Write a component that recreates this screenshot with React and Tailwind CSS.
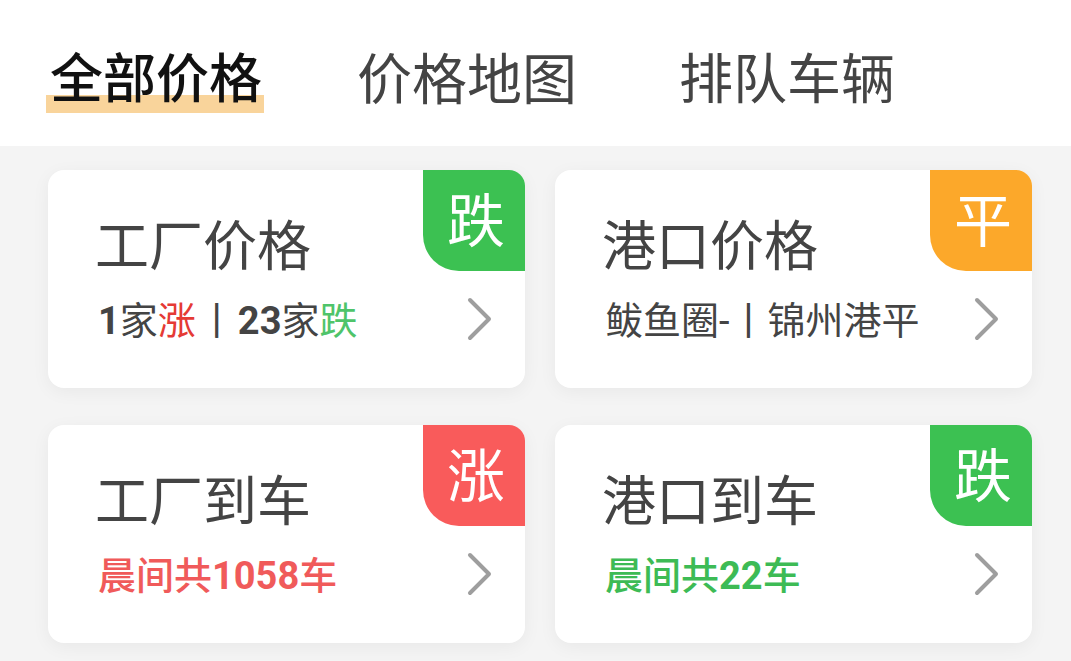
const cards = [
  {
    title: "工厂价格",
    badge: "跌",
    badgeColor: "bg-[#3cc152]",
    sub: (
      <>
        <span className="font-bold">1</span>
        <span>家</span>
        <span className="text-[#e53a35]">涨</span>
        <span className="mx-[2px] font-normal">丨</span>
        <span className="font-bold">23</span>
        <span>家</span>
        <span className="text-[#4fc46a]">跌</span>
      </>
    ),
    subColor: "text-[#444444]",
  },
  {
    title: "港口价格",
    badge: "平",
    badgeColor: "bg-[#fca82a]",
    sub: <span>鲅鱼圈-丨锦州港平</span>,
    subColor: "text-[#444444]",
  },
  {
    title: "工厂到车",
    badge: "涨",
    badgeColor: "bg-[#f95b5b]",
    sub: (
      <>
        <span className="font-medium">晨间共</span>
        <span className="font-bold">1058</span>
        <span className="font-medium">车</span>
      </>
    ),
    subColor: "text-[#f05a5a]",
  },
  {
    title: "港口到车",
    badge: "跌",
    badgeColor: "bg-[#3cc152]",
    sub: (
      <>
        <span className="font-medium">晨间共</span>
        <span className="font-bold">22</span>
        <span className="font-medium">车</span>
      </>
    ),
    subColor: "text-[#3dbb55]",
  },
];

function Chevron() {
  return (
    <svg width="26" height="44" viewBox="0 0 26 44" fill="none">
      <polyline
        points="3,3 22,22 3,41"
        stroke="#9e9e9e"
        strokeWidth="4"
        strokeLinecap="round"
        strokeLinejoin="round"
      />
    </svg>
  );
}

function Card({ card }) {
  return (
    <div className="relative h-[218px] rounded-2xl bg-white shadow-[0_4px_18px_rgba(0,0,0,0.05)]">
      <div
        className={`absolute right-0 top-0 flex h-[101px] w-[102px] items-center justify-center rounded-tr-2xl rounded-bl-[36px] pb-2 pl-1 text-[58px] leading-none text-white ${card.badgeColor}`}
      >
        {card.badge}
      </div>
      <div className="pl-[47px] pt-[46px] text-[54px] leading-[54px] text-[#444444]">
        {card.title}
      </div>
      <div className="flex items-center justify-between pl-[50px] pr-[32px] pt-[31px]">
        <div
          className={`whitespace-nowrap text-[38px] leading-[38px] ${card.subColor}`}
          style={{ fontFamily: 'Roboto, "Noto Sans CJK SC", sans-serif' }}
        >
          {card.sub}
        </div>
        <div className="-mt-[4px]">
          <Chevron />
        </div>
      </div>
    </div>
  );
}

export default function App() {
  const tabs = [
    { label: "全部价格", active: true, ml: "ml-[50px]", size: "text-[53px]" },
    { label: "价格地图", active: false, ml: "ml-[95px]", size: "text-[55px]" },
    { label: "排队车辆", active: false, ml: "ml-[102px]", size: "text-[54px]" },
  ];

  return (
    <div
      className="h-[661px] w-[1071px] overflow-hidden bg-[#f4f4f4]"
      style={{ fontFamily: '"Noto Sans CJK SC", sans-serif' }}
    >
      <div className="flex h-[146px] items-start bg-white pt-[49px]">
        {tabs.map((t) => (
          <div key={t.label} className={`relative ${t.ml}`}>
            {t.active && (
              <div className="absolute -left-[4px] -right-[2px] top-[46px] h-[18px] bg-[#f9d49b]" />
            )}
            <span
              className={`relative leading-[53px] ${t.size} ${
                t.active ? "font-medium text-[#111111]" : "text-[#444444]"
              }`}
            >
              {t.label}
            </span>
          </div>
        ))}
      </div>
      <div className="grid grid-cols-2 gap-x-[30px] gap-y-[37px] pl-[48px] pr-[39px] pt-[24px]">
        {cards.map((c) => (
          <Card key={c.title} card={c} />
        ))}
      </div>
    </div>
  );
}
